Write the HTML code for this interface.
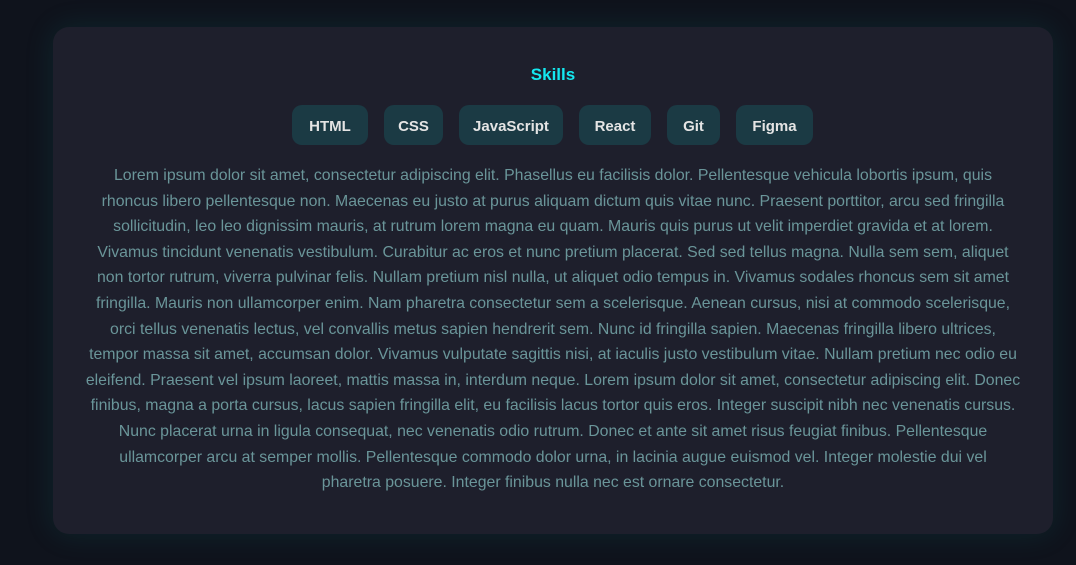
<!DOCTYPE html>
<html><head><style>
html,body{margin:0;padding:0;width:1076px;height:565px;background:#0f131c;overflow:hidden;font-family:"Liberation Sans",sans-serif}
.card{position:absolute;left:53px;top:27px;width:1000px;height:507px;background:#1e1f2c;border-radius:16px;box-shadow:0 0 30px rgba(0,160,160,0.13)}
h2{position:absolute;top:65px;left:0;width:1106px;text-align:center;margin:0;color:#14e8f0;font-size:17px;font-weight:bold}
.chip{position:absolute;top:105px;height:40px;line-height:43px;background:#1b3a44;color:#e4e4e4;font-weight:bold;font-size:15px;text-align:center;border-radius:10px}
.t{position:absolute;top:163px;left:53px;width:1000px;text-align:center;color:#6a9599;font-size:15.85px;line-height:25.6px}
.t div{white-space:nowrap}
</style></head><body>
<div class="card"></div>
<h2>Skills</h2>
<div class="chip" style="left:292px;width:76px">HTML</div>
<div class="chip" style="left:384px;width:59px">CSS</div>
<div class="chip" style="left:459px;width:104px">JavaScript</div>
<div class="chip" style="left:579px;width:72px">React</div>
<div class="chip" style="left:667px;width:53px">Git</div>
<div class="chip" style="left:736px;width:77px">Figma</div>
<div class="t">
<div>Lorem ipsum dolor sit amet, consectetur adipiscing elit. Phasellus eu facilisis dolor. Pellentesque vehicula lobortis ipsum, quis</div>
<div>rhoncus libero pellentesque non. Maecenas eu justo at purus aliquam dictum quis vitae nunc. Praesent porttitor, arcu sed fringilla</div>
<div>sollicitudin, leo leo dignissim mauris, at rutrum lorem magna eu quam. Mauris quis purus ut velit imperdiet gravida et at lorem.</div>
<div>Vivamus tincidunt venenatis vestibulum. Curabitur ac eros et nunc pretium placerat. Sed sed tellus magna. Nulla sem sem, aliquet</div>
<div>non tortor rutrum, viverra pulvinar felis. Nullam pretium nisl nulla, ut aliquet odio tempus in. Vivamus sodales rhoncus sem sit amet</div>
<div>fringilla. Mauris non ullamcorper enim. Nam pharetra consectetur sem a scelerisque. Aenean cursus, nisi at commodo scelerisque,</div>
<div>orci tellus venenatis lectus, vel convallis metus sapien hendrerit sem. Nunc id fringilla sapien. Maecenas fringilla libero ultrices,</div>
<div>tempor massa sit amet, accumsan dolor. Vivamus vulputate sagittis nisi, at iaculis justo vestibulum vitae. Nullam pretium nec odio eu</div>
<div>eleifend. Praesent vel ipsum laoreet, mattis massa in, interdum neque. Lorem ipsum dolor sit amet, consectetur adipiscing elit. Donec</div>
<div>finibus, magna a porta cursus, lacus sapien fringilla elit, eu facilisis lacus tortor quis eros. Integer suscipit nibh nec venenatis cursus.</div>
<div>Nunc placerat urna in ligula consequat, nec venenatis odio rutrum. Donec et ante sit amet risus feugiat finibus. Pellentesque</div>
<div>ullamcorper arcu at semper mollis. Pellentesque commodo dolor urna, in lacinia augue euismod vel. Integer molestie dui vel</div>
<div>pharetra posuere. Integer finibus nulla nec est ornare consectetur.</div>
</div>
</body></html>
